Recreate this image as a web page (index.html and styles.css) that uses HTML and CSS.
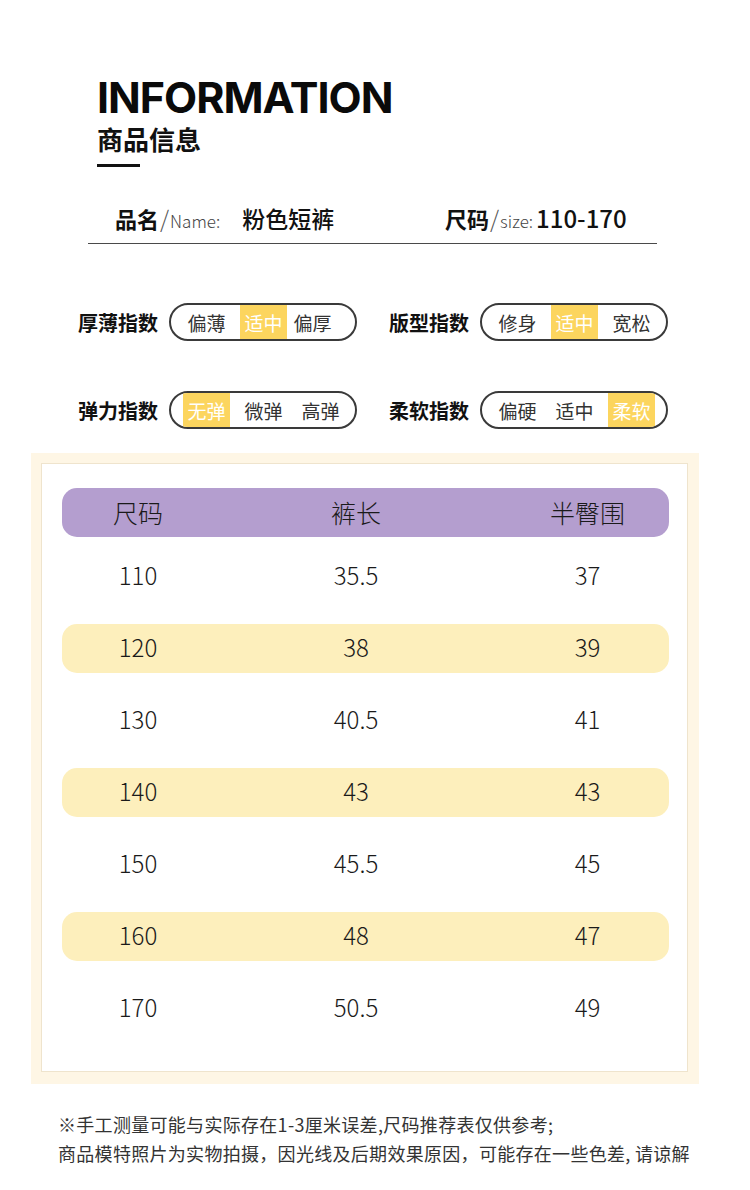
FILE: index.html
```html
<!DOCTYPE html>
<html lang="zh-CN">
<head>
<meta charset="utf-8">
<title>商品信息</title>
<link rel="stylesheet" href="styles.css">
</head>
<body>
<div class="page">
  <header class="head">
    <h1 class="title">INFORMATION</h1>
    <h2 class="subtitle">商品信息</h2>
    <div class="bar"></div>
  </header>

  <div class="info">
    <div class="info-item info-item--name"><b class="info-key">品名</b><span class="info-slash">/</span><span class="info-en">Name:</span><span class="info-val">粉色短裤</span></div>
    <div class="info-item"><b class="info-key">尺码</b><span class="info-slash">/</span><span class="info-en">size:</span><span class="info-val info-val--num">110-170</span></div>
  </div>

  <div class="indices">
    <div class="idx">
      <span class="idx-label">厚薄指数</span>
      <div class="pill pill--tight"><span class="seg">偏薄</span><span class="seg seg--on">适中</span><span class="seg">偏厚</span></div>
    </div>
    <div class="idx">
      <span class="idx-label">版型指数</span>
      <div class="pill"><span class="seg">修身</span><span class="seg seg--on">适中</span><span class="seg">宽松</span></div>
    </div>
    <div class="idx">
      <span class="idx-label">弹力指数</span>
      <div class="pill"><span class="seg seg--on">无弹</span><span class="seg">微弹</span><span class="seg">高弹</span></div>
    </div>
    <div class="idx">
      <span class="idx-label">柔软指数</span>
      <div class="pill"><span class="seg">偏硬</span><span class="seg">适中</span><span class="seg seg--on">柔软</span></div>
    </div>
  </div>

  <section class="chart">
    <div class="chart-inner">
      <div class="row row--head"><span>尺码</span><span>裤长</span><span>半臀围</span></div>
      <div class="row"><span>110</span><span>35.5</span><span>37</span></div>
      <div class="row row--alt"><span>120</span><span>38</span><span>39</span></div>
      <div class="row"><span>130</span><span>40.5</span><span>41</span></div>
      <div class="row row--alt"><span>140</span><span>43</span><span>43</span></div>
      <div class="row"><span>150</span><span>45.5</span><span>45</span></div>
      <div class="row row--alt"><span>160</span><span>48</span><span>47</span></div>
      <div class="row"><span>170</span><span>50.5</span><span>49</span></div>
    </div>
  </section>

  <div class="note">
    <p>※手工测量可能与实际存在1-3厘米误差,尺码推荐表仅供参考;</p>
    <p>商品模特照片为实物拍摄，因光线及后期效果原因，可能存在一些色差, 请谅解</p>
  </div>
</div>
</body>
</html>
```

FILE: styles.css
```css
html, body {
  margin: 0;
  padding: 0;
  background: #ffffff;
}

body {
  font-family: "Noto Sans CJK SC", "Noto Sans", sans-serif;
  color: #222;
}

.page {
  width: 750px;
  height: 1190px;
  overflow: hidden;
}

/* header */
.head {
  padding: 76px 0 0 97px;
}

.title {
  margin: 0;
  font-family: "Inter", "Liberation Sans", sans-serif;
  font-weight: 700;
  font-size: 43px;
  line-height: 43px;
  letter-spacing: -1px;
  color: #0a0a0a;
}

.subtitle {
  margin: 7px 0 0;
  font-size: 26px;
  line-height: 26px;
  font-weight: 700;
  color: #111;
}

.bar {
  width: 43px;
  height: 3px;
  margin-top: 12px;
  background: #111;
}

/* info line */
.info {
  margin: 36px 0 0 88px;
  width: 569px;
  box-sizing: border-box;
  padding-left: 27px;
  height: 41px;
  border-bottom: 1px solid #4a4a4a;
  display: flex;
  align-items: flex-start;
}

.info-item {
  display: flex;
  align-items: baseline;
  line-height: 30px;
  white-space: nowrap;
}

.info-item--name {
  width: 330px;
}

.info-key {
  font-size: 22px;
  font-weight: 700;
  color: #111;
}

.info-slash {
  font-size: 23px;
  font-weight: 300;
  color: #555;
  margin: 0 1px 0 1px;
}

.info-en {
  font-size: 17px;
  font-weight: 300;
  color: #444;
}

.info-item--name .info-val {
  margin-left: 22px;
  font-size: 23px;
}

.info-val {
  font-size: 22px;
  font-weight: 500;
  color: #111;
  margin-left: 3px;
}

.info-val--num {
  font-size: 24px;
}

/* indices */
.indices {
  margin: 59px 0 0 78px;
  display: grid;
  grid-template-columns: 279px 279px;
  column-gap: 32px;
  row-gap: 50px;
}

.idx {
  display: flex;
  align-items: center;
}

.idx-label {
  width: 80px;
  font-size: 20px;
  font-weight: 700;
  color: #111;
  white-space: nowrap;
  margin-right: 11px;
}

.pill {
  box-sizing: border-box;
  width: 188px;
  height: 38px;
  border: 2px solid #3a3a3a;
  border-radius: 19px;
  padding-left: 12px;
  display: flex;
  align-items: stretch;
  gap: 10px;
  overflow: hidden;
}

.seg {
  width: 47px;
  display: flex;
  align-items: center;
  justify-content: center;
  font-size: 19px;
  font-weight: 400;
  color: #333;
}

.seg--on {
  background: #fcd55e;
  color: #ffffff;
}

.pill--tight .seg:last-child {
  margin-left: -8px;
}

/* chart */
.chart {
  margin: 24px 0 0 31px;
  width: 668px;
  box-sizing: border-box;
  padding: 10px 11px 12px 10px;
  background: #fef6e5;
}

.chart-inner {
  background: #ffffff;
  border: 1px solid #efe4cd;
  padding: 24px 18px 38px 20px;
}

.row {
  display: grid;
  grid-template-columns: 152px 284px 1fr;
  align-items: center;
  height: 49px;
  border-radius: 15px;
  margin-top: 23px;
  font-size: 24px;
  line-height: 1;
  font-weight: 300;
  color: #1a1a1a;
}

.row span {
  text-align: center;
  padding-bottom: 3px;
}

.row span:last-child {
  padding-left: 8px;
}

.row--head {
  margin-top: 0;
  margin-bottom: -8px;
  background: #b49ecf;
  font-size: 25px;
}

.row--head span {
  padding-bottom: 0;
}

.row--alt {
  background: #fdefbc;
}

/* note */
.note {
  margin: 26px 0 0 58px;
  font-size: 18px;
  line-height: 29px;
  color: #333;
  letter-spacing: 0.3px;
}

.note p {
  margin: 0;
  white-space: nowrap;
}
```
